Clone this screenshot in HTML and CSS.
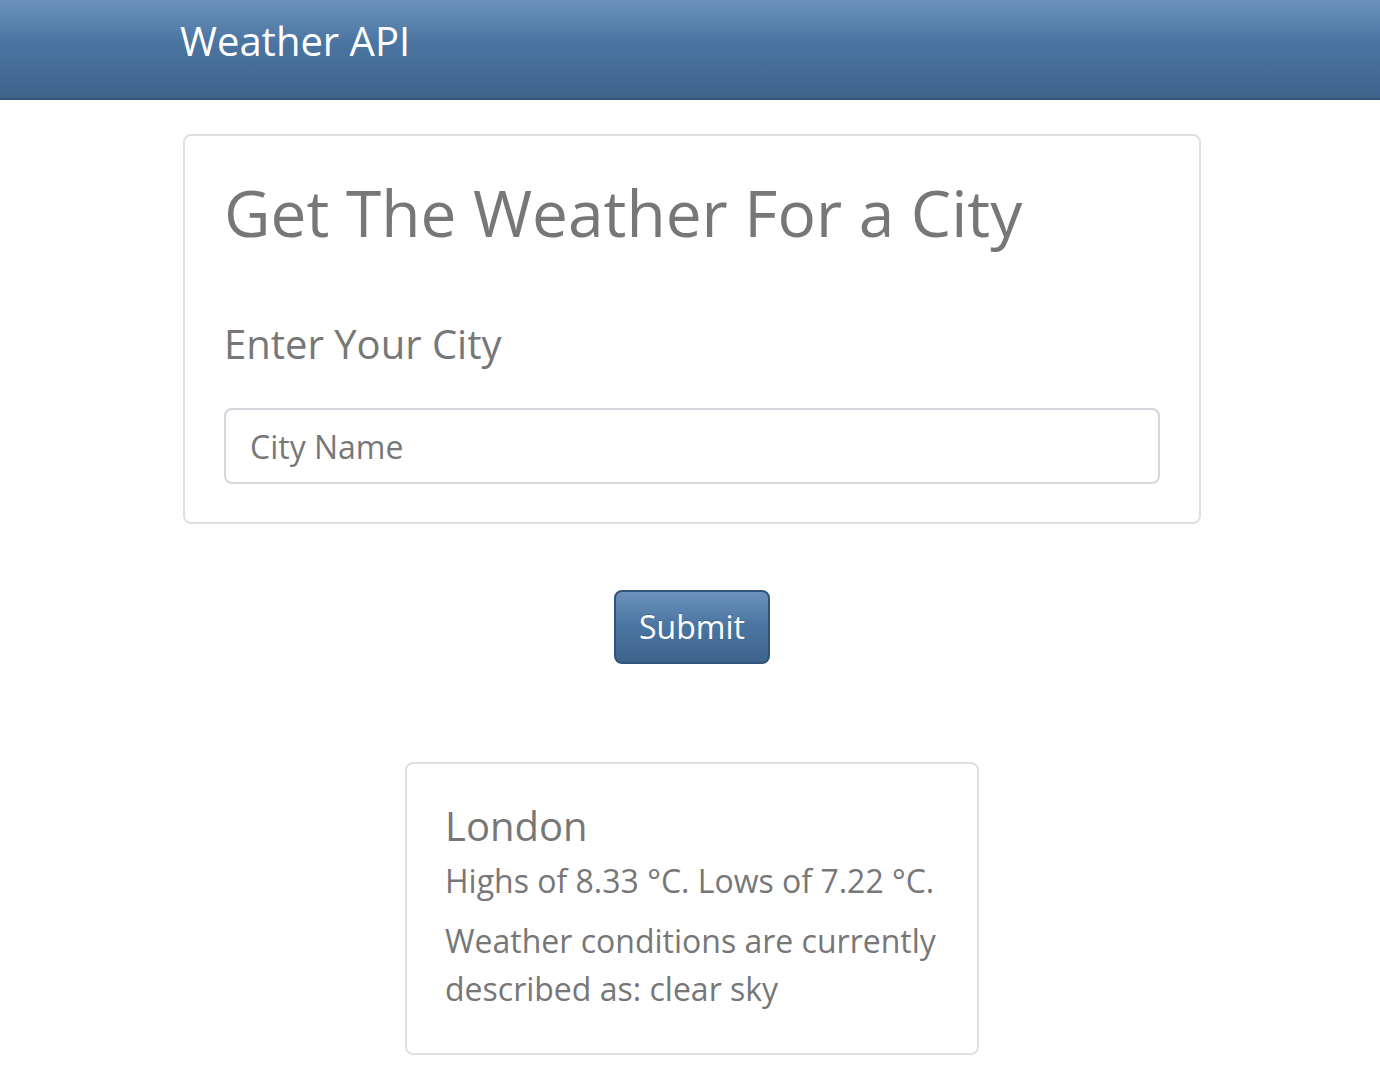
FILE: index.html
```html
<!DOCTYPE html>
<html lang="en">
<head>
<meta charset="utf-8">
<title>Weather API</title>
<link rel="stylesheet" href="styles.css">
</head>
<body>
<nav class="navbar">
  <div class="nav-inner">
    <a class="brand" href="#">Weather API</a>
  </div>
</nav>
<main class="container">
  <form class="card form-card">
    <h2 class="title">Get The Weather For a City</h2>
    <label class="label" for="city">Enter Your City</label>
    <input class="input" id="city" type="text" placeholder="City Name">
  </form>
  <div class="actions">
    <button class="btn" type="button">Submit</button>
  </div>
  <section class="card result-card">
    <h5 class="city">London</h5>
    <p class="temps">Highs of 8.33 °C. Lows of 7.22 °C.</p>
    <p class="desc">Weather conditions are currently described as: clear sky</p>
  </section>
</main>
</body>
</html>
```

FILE: styles.css
```css
* { box-sizing: border-box; }
html, body { margin: 0; padding: 0; background: #fff; }
body {
  font-family: "Open Sans", "Noto Sans", "Liberation Sans", sans-serif;
  color: #777;
}
.navbar {
  height: 100px;
  background: linear-gradient(to bottom, #6a92bd 0%, #4a74a0 45%, #3e648d 100%);
  border-bottom: 2px solid #345578;
}
.nav-inner {
  width: 1022px;
  margin: 0 auto;
  padding: 17px 0 0 1px;
}
.brand {
  display: inline-block;
  font-size: 40px;
  line-height: 48px;
  color: #fff;
  text-decoration: none;
}
.container {
  width: 1022px;
  margin: 0 auto;
  padding: 34px 0 0 4px;
  display: flex;
  flex-direction: column;
  align-items: center;
}
.card {
  border: 2px solid #e0e0e0;
  border-radius: 8px;
  background: #fff;
}
.form-card {
  width: 1018px;
  margin: 0;
  padding: 38px 39px 38px;
  display: flex;
  flex-direction: column;
}
.title {
  margin: 0;
  font-size: 64px;
  line-height: 77px;
  font-weight: 400;
  color: #777;
}
.label {
  margin-top: 69px;
  font-size: 40px;
  line-height: 48px;
  color: #777;
}
.input {
  margin-top: 40px;
  height: 76px;
  width: 100%;
  border: 2px solid #d3d6db;
  border-radius: 8px;
  padding: 0 24px;
  font-family: inherit;
  font-size: 32px;
  color: #555;
  background: #fff;
  outline: none;
}
.input::placeholder { color: #777; opacity: 1; }
.actions {
  margin-top: 66px;
  display: flex;
  justify-content: center;
  width: 1018px;
}
.btn {
  width: 156px;
  height: 74px;
  border: 2px solid #2f5479;
  border-radius: 8px;
  background: linear-gradient(to bottom, #6a92bd 0%, #4a74a0 50%, #3e648d 100%);
  color: #fff;
  font-family: inherit;
  font-size: 32px;
  line-height: 1;
  padding: 0;
  text-shadow: 0 -1px 0 rgba(0,0,0,0.2);
  cursor: pointer;
}
.result-card {
  margin-top: 98px;
  width: 574px;
  padding: 38px 38px 40px;
}
.city {
  margin: 0 0 7px;
  font-size: 40px;
  line-height: 48px;
  font-weight: 400;
  color: #777;
}
.temps, .desc {
  margin: 0;
  font-size: 32px;
  line-height: 48px;
}
.desc { margin-top: 12px; }
```
